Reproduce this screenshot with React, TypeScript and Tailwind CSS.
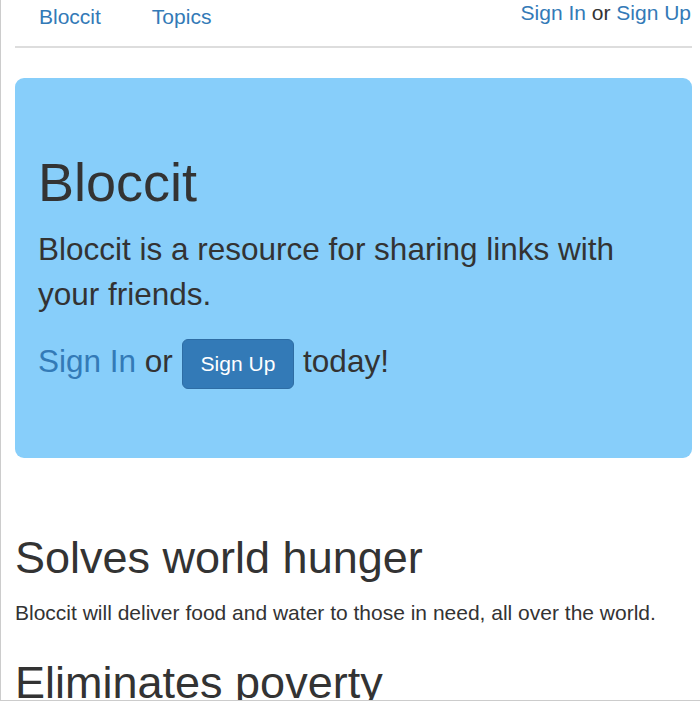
import React from "react";

function App() {
  return (
    <div className="w-full h-[701px] overflow-hidden bg-white border-l border-b border-[#cccccc] font-['Liberation_Sans',Arial,sans-serif] text-[#333]">
      <div className="pl-[14px] pr-[8px] flex flex-col">
        {/* nav */}
        <div className="h-[48px] border-b-2 border-[#dddddd] flex justify-between items-start">
          <ul className="flex gap-[51px] pl-[24px] pt-[2px] text-[21px] leading-[30px] text-[#337ab7]">
            <li>Bloccit</li>
            <li>Topics</li>
          </ul>
          <div className="text-[21px] leading-[26px] mr-[1px]">
            <span className="text-[#337ab7]">Sign In</span> or{" "}
            <span className="text-[#337ab7]">Sign Up</span>
          </div>
        </div>

        {/* jumbotron */}
        <div className="mt-[30px] h-[380px] bg-[#87cefa] rounded-[9px] px-[23px] pt-[45px]">
          <h1 className="mt-[30px] mb-[15px] text-[54px] leading-[1.1]">Bloccit</h1>
          <p className="text-[31.5px] leading-[45px] mb-[22px]">
            Bloccit is a resource for sharing links with your friends.
          </p>
          <p className="text-[31.5px] leading-[45px]">
            <span className="text-[#337ab7]">Sign In</span> or{" "}
            <span className="inline-block align-middle bg-[#337ab7] border border-[#2e6da4] rounded-[6px] px-[18px] py-[9px] text-white text-[21px] leading-[30px]">
              Sign Up
            </span>{" "}
            today!
          </p>
        </div>

        {/* features */}
        <h2 className="mt-[75px] mb-[15px] text-[45px] leading-[1.1]">Solves world hunger</h2>
        <p className="text-[21px] leading-[30px]">
          Bloccit will deliver food and water to those in need, all over the world.
        </p>
        <h2 className="mt-[30px] mb-[15px] text-[45px] leading-[1.1]">Eliminates poverty</h2>
      </div>
    </div>
  );
}

export default App;
